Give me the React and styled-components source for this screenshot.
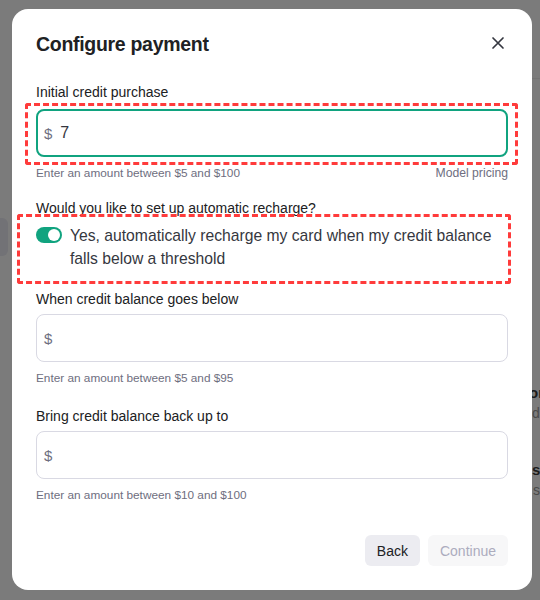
import React, { useState } from "react";
import styled, { createGlobalStyle } from "styled-components";

const GlobalStyle = createGlobalStyle`
  * { box-sizing: border-box; }
  html, body { margin: 0; padding: 0; }
  body {
    background: #7b7b7b;
    font-family: "Liberation Sans", Arial, sans-serif;
    color: #202123;
    overflow: hidden;
  }
`;

const Screen = styled.div`
  position: relative;
  width: 540px;
  height: 600px;
  overflow: hidden;
  background: #7b7b7b;
`;

// faint page content that shows behind the overlay
const Behind = styled.div`
  position: absolute;
  inset: 0;
  pointer-events: none;
`;

const BehindCard = styled.div`
  position: absolute;
  left: -10px;
  top: 218px;
  width: 18px;
  height: 38px;
  border-radius: 6px;
  background: #727276;
`;

const BehindRule = styled.div`
  position: absolute;
  left: 532px;
  right: 0;
  top: 78px;
  height: 1px;
  background: #737373;
`;

const BehindText = styled.span`
  position: absolute;
  left: ${(p) => p.$x}px;
  top: ${(p) => p.$y}px;
  font-size: ${(p) => (p.$strong ? 15 : 14)}px;
  font-weight: ${(p) => (p.$strong ? 700 : 400)};
  color: ${(p) => (p.$strong ? "#1c1c1c" : "#4a4a4a")};
  white-space: nowrap;
`;

const Modal = styled.div`
  position: relative;
  margin: 9px 0 0 12px;
  width: 520px;
  height: 581px;
  background: #fff;
  border-radius: 16px;
  padding: 23px 24px 24px;
  display: flex;
  flex-direction: column;
`;

const Header = styled.div`
  display: flex;
  align-items: center;
  justify-content: space-between;
  margin-bottom: 28px;
`;

const Title = styled.h2`
  margin: 0;
  font-size: 19.5px;
  line-height: 24px;
  font-weight: 700;
  letter-spacing: -0.3px;
  color: #202123;
`;

const CloseButton = styled.button`
  border: none;
  background: none;
  padding: 0;
  margin-top: -3px;
  width: 20px;
  height: 20px;
  display: flex;
  align-items: center;
  justify-content: center;
  color: #353740;
  cursor: pointer;
`;

const Field = styled.div`
  display: flex;
  flex-direction: column;
  margin-bottom: ${(p) => p.$gap ?? 24}px;
`;

const Label = styled.label`
  font-size: 14px;
  line-height: 16px;
  color: #202123;
  margin-bottom: 7px;
`;

const Highlight = styled.div`
  margin: ${(p) => p.$margin};
  padding: ${(p) => p.$padding};
  border: 3px dashed #ff3b3b;
  border-radius: 3px;
`;

const InputBox = styled.div`
  height: 48px;
  border-radius: 8px;
  border: ${(p) => (p.$focused ? "2px solid #10a37f" : "1px solid #d9d9e3")};
  padding-left: ${(p) => (p.$focused ? 6 : 7)}px;
  display: flex;
  align-items: center;
  background: #fff;
`;

const Currency = styled.span`
  color: #6e6e80;
  margin-right: 8px;
  font-size: 15px;
`;

const AmountInput = styled.input`
  flex: 1;
  border: none;
  outline: none;
  background: transparent;
  font-family: inherit;
  font-size: 16px;
  color: #353740;
  padding: 0;
`;

const Helper = styled.div`
  display: flex;
  justify-content: space-between;
  margin-top: ${(p) => p.$top ?? 7}px;
  font-size: 11.8px;
  line-height: 14px;
  color: #6e6e80;
`;

const HelperLink = styled.span`
  font-size: 12.2px;
`;

const ToggleRow = styled.div`
  display: flex;
  align-items: flex-start;
  gap: 8px;
`;

const Switch = styled.button`
  flex: none;
  width: 26px;
  height: 16px;
  margin-top: 3px;
  border: none;
  border-radius: 8px;
  padding: 2px;
  background: ${(p) => (p.$on ? "#10a37f" : "#c5c5d2")};
  display: flex;
  justify-content: ${(p) => (p.$on ? "flex-end" : "flex-start")};
  cursor: pointer;
`;

const Knob = styled.span`
  width: 12px;
  height: 12px;
  border-radius: 50%;
  background: #fff;
`;

const ToggleText = styled.div`
  font-size: 15.7px;
  line-height: 23px;
  color: #353740;
`;

const Footer = styled.div`
  margin-top: auto;
  display: flex;
  justify-content: flex-end;
  gap: 8px;
`;

const Button = styled.button`
  height: 31px;
  padding: 0 12px;
  border: none;
  border-radius: 6px;
  font-family: inherit;
  font-size: 14px;
  background: ${(p) => (p.$disabled ? "#f7f7f8" : "#ececf1")};
  color: ${(p) => (p.$disabled ? "#acacbe" : "#202123")};
  cursor: ${(p) => (p.$disabled ? "default" : "pointer")};
`;

const CloseIcon = () => (
  <svg width="14" height="14" viewBox="0 0 14 14" fill="none">
    <path d="M2 2L12 12M12 2L2 12" stroke="currentColor" strokeWidth="1.7" strokeLinecap="round" />
  </svg>
);

const AmountField = ({ label, hint }) => (
  <>
    <InputBox>
      <Currency>$</Currency>
      <AmountInput aria-label={label} />
    </InputBox>
    <Helper $top={9}>
      <span>{hint}</span>
    </Helper>
  </>
);

export default function App() {
  const [recharge, setRecharge] = useState(true);

  return (
    <Screen>
      <GlobalStyle />
      <Behind>
        <BehindCard />
        <BehindRule />
        <BehindText $x={529} $y={384} $strong>or</BehindText>
        <BehindText $x={532} $y={405}>d</BehindText>
        <BehindText $x={532} $y={461} $strong>s</BehindText>
        <BehindText $x={533} $y={482}>sp</BehindText>
      </Behind>
      <Modal>
        <Header>
          <Title>Configure payment</Title>
          <CloseButton aria-label="Close">
            <CloseIcon />
          </CloseButton>
        </Header>

        <Field $gap={20}>
          <Label>Initial credit purchase</Label>
          <Highlight $margin="-4px -10px 0 -11px" $padding="3px 7px 5px 8px">
            <InputBox $focused>
              <Currency>$</Currency>
              <AmountInput defaultValue="7" aria-label="Initial credit purchase" />
            </InputBox>
          </Highlight>
          <Helper $top={1}>
            <span>Enter an amount between $5 and $100</span>
            <HelperLink>Model pricing</HelperLink>
          </Helper>
        </Field>

        <Field $gap={7}>
          <Label>Would you like to set up automatic recharge?</Label>
          <Highlight $margin="-9px -3px 0 -19px" $padding="7px 4px 11px 16px">
            <ToggleRow>
              <Switch $on={recharge} onClick={() => setRecharge(!recharge)} aria-label="Automatic recharge">
                <Knob />
              </Switch>
              <ToggleText>
                Yes, automatically recharge my card when my credit balance falls below a threshold
              </ToggleText>
            </ToggleRow>
          </Highlight>
        </Field>

        <Field $gap={23}>
          <Label>When credit balance goes below</Label>
          <AmountField label="When credit balance goes below" hint="Enter an amount between $5 and $95" />
        </Field>

        <Field $gap={0}>
          <Label>Bring credit balance back up to</Label>
          <AmountField label="Bring credit balance back up to" hint="Enter an amount between $10 and $100" />
        </Field>

        <Footer>
          <Button>Back</Button>
          <Button $disabled>Continue</Button>
        </Footer>
      </Modal>
    </Screen>
  );
}
